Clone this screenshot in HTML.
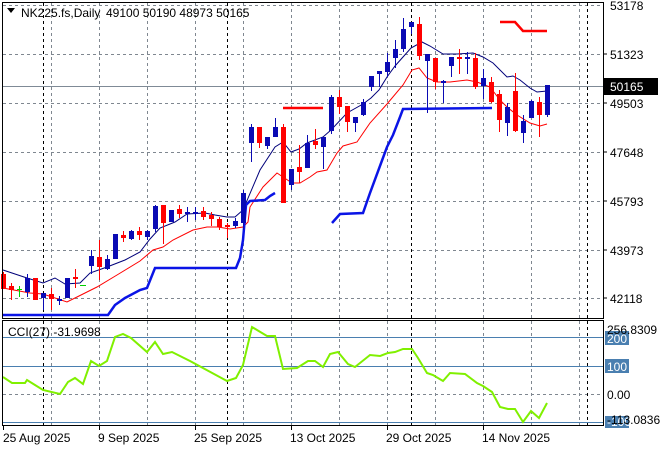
<!DOCTYPE html>
<html><head><meta charset="utf-8"><style>
html,body{margin:0;padding:0;background:#fff;width:660px;height:450px;overflow:hidden}
svg{display:block;font-family:"Liberation Sans",sans-serif;font-size:12px}
</style></head><body>
<svg width="660" height="450" viewBox="0 0 660 450" xmlns="http://www.w3.org/2000/svg">
<rect width="660" height="450" fill="#fff"/>
<g stroke="#7f8790" stroke-width="1" stroke-dasharray="3,3" fill="none">
<path d="M3 5.5H603M3 54.5H603M3 103.5H603M3 152.5H603M3 201.5H603M3 250.5H603M3 298.5H603"/>
<path d="M51.5 3V318M99.5 3V318M147.5 3V318M195.5 3V318M243.5 3V318M291.5 3V318M339.5 3V318M387.5 3V318M435.5 3V318M483.5 3V318M531.5 3V318M579.5 3V318"/>
<path d="M51.5 321V425M99.5 321V425M147.5 321V425M195.5 321V425M243.5 321V425M291.5 321V425M339.5 321V425M387.5 321V425M435.5 321V425M483.5 321V425M531.5 321V425M579.5 321V425"/>
<path d="M3 394.5H603"/>
</g>
<g stroke="#000" stroke-width="1" stroke-dasharray="3,3" fill="none">
<path d="M43.5 3V318M227.5 3V318M411.5 3V318M587.5 3V318M43.5 321V425M227.5 321V425M411.5 321V425M587.5 321V425"/>
</g>
<path d="M3 86.5H603" stroke="#7f8a96" stroke-width="1"/>
<g stroke="#4a7fb0" stroke-width="1"><path d="M3 337.5H603M3 366.5H603M3 422.5H603"/></g>

<polyline fill="none" stroke="#00007a" stroke-width="1" points="3,270 12,273 27,278 43,283 55,278 65,284 80,283 90,273 107,267 125,260 140,252 150,239 160,228 175,222 187,214 205,213 215,215 227,217 235,217 243,210 260,170 275,147 283,142 291,152 299,149 307,143 323,137 331,130 347,113 363,104 371,98 379,90 387,77 395,66 403,57 411,48 422,42 430,46 443,54 457,54 473,53 483,57 493,63 507,77 513,76 520,80 530,88 537,92 547,91"/>
<polyline fill="none" stroke="#ff0000" stroke-width="1" points="3,288 30,293 43,294 67,302 77,297 97,287 117,275 140,261 153,250 163,247 173,240 193,230 207,227 218,227 230,229 243,227 248,222 250,207 263,187 277,173 283,177 292,183 300,183 310,177 317,172 327,170 337,153 343,146 357,142 370,123 387,104 403,85 412,70 419,68 427,78 437,82 450,82 467,80 477,82 490,87 500,100 507,107 517,115 530,123 540,126 547,124"/>
<g fill="none" stroke="#0a14e6" stroke-width="2.5">
<polyline points="3,315 108,315 115,305 125,298 140,290 147,288 155,268 236,268 240,258 243,240 246,205 250,201 265,200 270,196 275,193"/>
<polyline points="332,223 340,214 363,213 370,193 387,147 393,135 400,117 403,109 492,108"/>
</g>
<g fill="none" stroke="#ff0000" stroke-width="2.5">
<polyline points="283,108 323,108"/>
<polyline points="500,22 515,22 523,31 547,31"/>
</g>

<g stroke="#ff0000" fill="#ff0000">
<path d="M3.5 272V289M11.5 283V300M35.5 278V300M51.5 288V310M75.5 269V288M99.5 240V280M123.5 231V242M139.5 227V240M163.5 205V244M179.5 205V218M203.5 207V220M211.5 212V226M219.5 217V230M227.5 223V238M259.5 127V148M283.5 124V203M299.5 145V183M315.5 129V149M339.5 90V114M347.5 106V132M419.5 17V60M435.5 58V89M459.5 49V74M475.5 53V89M491.5 77V103M499.5 90V132M515.5 73V132M539.5 97V137"/>
</g>
<g fill="#ff0000">
<rect x="1" y="274" width="5" height="15"/><rect x="9" y="286" width="5" height="4"/><rect x="33" y="278" width="5" height="22"/><rect x="49" y="294" width="5" height="5"/><rect x="73" y="277" width="5" height="2"/><rect x="97" y="257" width="5" height="10"/><rect x="121" y="235" width="5" height="3"/><rect x="137" y="231" width="5" height="4"/><rect x="161" y="205" width="5" height="18"/><rect x="177" y="209" width="5" height="5"/><rect x="201" y="211" width="5" height="6"/><rect x="209" y="215" width="5" height="4"/><rect x="217" y="219" width="5" height="8"/><rect x="225" y="225" width="5" height="2"/><rect x="257" y="127" width="5" height="16"/><rect x="281" y="127" width="5" height="76"/><rect x="297" y="167" width="5" height="5"/><rect x="313" y="141" width="5" height="4"/><rect x="337" y="97" width="5" height="10"/><rect x="345" y="106" width="5" height="16"/><rect x="417" y="24" width="5" height="32"/><rect x="433" y="58" width="5" height="24"/><rect x="457" y="57" width="5" height="2"/><rect x="473" y="58" width="5" height="29"/><rect x="489" y="82" width="5" height="20"/><rect x="497" y="94" width="5" height="26"/><rect x="513" y="91" width="5" height="40"/><rect x="537" y="102" width="5" height="13"/>
</g>
<g stroke="#0a0ab4">
<path d="M27.5 274V297M43.5 293V310M59.5 296V305M67.5 278V298M91.5 250V274M107.5 255V270M115.5 234V259M131.5 230V240M147.5 230V240M155.5 205V232M171.5 210V222M187.5 207V222M195.5 207V220M235.5 218V228M243.5 190V230M251.5 124V162M267.5 137V149M275.5 118V137M291.5 169V190M307.5 135V168M323.5 137V169M331.5 95V134M355.5 117V132M363.5 99V116M371.5 76V91M379.5 71V87M387.5 53V77M395.5 40V68M403.5 18V52M411.5 22V34M427.5 54V113M443.5 80V103M451.5 57V77M467.5 52V74M483.5 69V99M507.5 103V136M523.5 115V143M531.5 100V118M547.5 85V117"/>
</g>
<g fill="#0a0ab4">
<rect x="25" y="278" width="5" height="14"/><rect x="41" y="293" width="5" height="5"/><rect x="57" y="299" width="5" height="2"/><rect x="65" y="278" width="5" height="20"/><rect x="89" y="256" width="5" height="10"/><rect x="105" y="259" width="5" height="10"/><rect x="113" y="234" width="5" height="25"/><rect x="129" y="231" width="5" height="8"/><rect x="145" y="231" width="5" height="6"/><rect x="153" y="206" width="5" height="23"/><rect x="169" y="210" width="5" height="12"/><rect x="185" y="212" width="5" height="2"/><rect x="193" y="212" width="5" height="2"/><rect x="233" y="221" width="5" height="5"/><rect x="241" y="193" width="5" height="30"/><rect x="249" y="127" width="5" height="16"/><rect x="265" y="137" width="5" height="9"/><rect x="273" y="127" width="5" height="10"/><rect x="289" y="169" width="5" height="16"/><rect x="305" y="143" width="5" height="25"/><rect x="321" y="137" width="5" height="10"/><rect x="329" y="97" width="5" height="34"/><rect x="353" y="117" width="5" height="6"/><rect x="361" y="102" width="5" height="13"/><rect x="369" y="76" width="5" height="11"/><rect x="377" y="71" width="5" height="3"/><rect x="385" y="62" width="5" height="10"/><rect x="393" y="49" width="5" height="9"/><rect x="401" y="29" width="5" height="20"/><rect x="409" y="22" width="5" height="5"/><rect x="425" y="54" width="5" height="7"/><rect x="441" y="81" width="5" height="2"/><rect x="449" y="57" width="5" height="9"/><rect x="465" y="57" width="5" height="2"/><rect x="481" y="78" width="5" height="8"/><rect x="505" y="107" width="5" height="16"/><rect x="521" y="121" width="5" height="12"/><rect x="529" y="101" width="5" height="17"/><rect x="545" y="85" width="5" height="30"/>
</g>
<g stroke="#00d000"><path d="M19.5 286V297M17 289.5H22M80 285.5H86"/></g>

<polyline fill="none" stroke="#80f000" stroke-width="2" points="3,377 12,383 25,383 27,380 35,385 43,390 60,394 68,382 75,378 83,384 91,361 99,366 107,361 115,337 123,334 131,338 147,352 155,342 163,354 172,352 180,356 190,361 227,381 236,378 243,365 252,327 267,336 275,336 283,369 297,368 308,361 315,361 323,367 330,354 338,352 348,364 355,367 370,355 380,356 388,353 395,352 403,349 412,349 418,358 427,373 433,375 443,381 450,373 465,374 477,383 483,386 492,392 500,407 508,409 515,409 523,422 531,411 539,418 547,403"/>

<g fill="none" stroke="#000" stroke-width="1">
<path d="M2.5 2.5H603.5V318.5H2.5Z"/>
<path d="M2.5 320.5H603.5V425.5H2.5Z"/>
<path d="M603.5 5V9M603.5 54H607M603.5 103H607M603.5 152H607M603.5 201H607M603.5 250H607M603.5 298H607"/>
<path d="M3.5 426V430M99.5 426V430M195.5 426V430M291.5 426V430M387.5 426V430M483.5 426V430"/>
</g>

<path d="M7 8H15L11 13Z" fill="#000"/>
<text x="21" y="17" fill="#000">NK225.fs,Daily</text>
<text x="106" y="17" fill="#000">49100 50190 48973 50165</text>

<g fill="#000">
<text x="610" y="10">53178</text>
<text x="610" y="59">51323</text>
<text x="610" y="108">49503</text>
<text x="610" y="157">47648</text>
<text x="610" y="206">45793</text>
<text x="610" y="255">43973</text>
<text x="610" y="303">42118</text>
</g>
<rect x="604" y="78" width="54" height="17" fill="#000"/>
<text x="610" y="91" fill="#fff">50165</text>

<rect x="605" y="331" width="24" height="14" fill="#4a7fb0"/>
<rect x="605" y="359" width="24" height="14" fill="#4a7fb0"/>
<rect x="605" y="416" width="24" height="12" fill="#4a7fb0"/>
<text x="607" y="343" fill="#fff">200</text>
<text x="607" y="371" fill="#fff">100</text>
<text x="607" y="426" fill="#fff">-100</text>
<text x="607" y="334" fill="#000">256.8309</text>
<text x="607" y="399" fill="#000">0.00</text>
<text x="607" y="424" fill="#000">-113.0836</text>
<text x="8" y="336" fill="#000">CCI(27) -31.9698</text>

<g fill="#000">
<text x="3" y="442">25 Aug 2025</text>
<text x="98" y="442">9 Sep 2025</text>
<text x="194" y="442">25 Sep 2025</text>
<text x="290" y="442">13 Oct 2025</text>
<text x="386" y="442">29 Oct 2025</text>
<text x="482" y="442">14 Nov 2025</text>
</g>
</svg>
</body></html>
